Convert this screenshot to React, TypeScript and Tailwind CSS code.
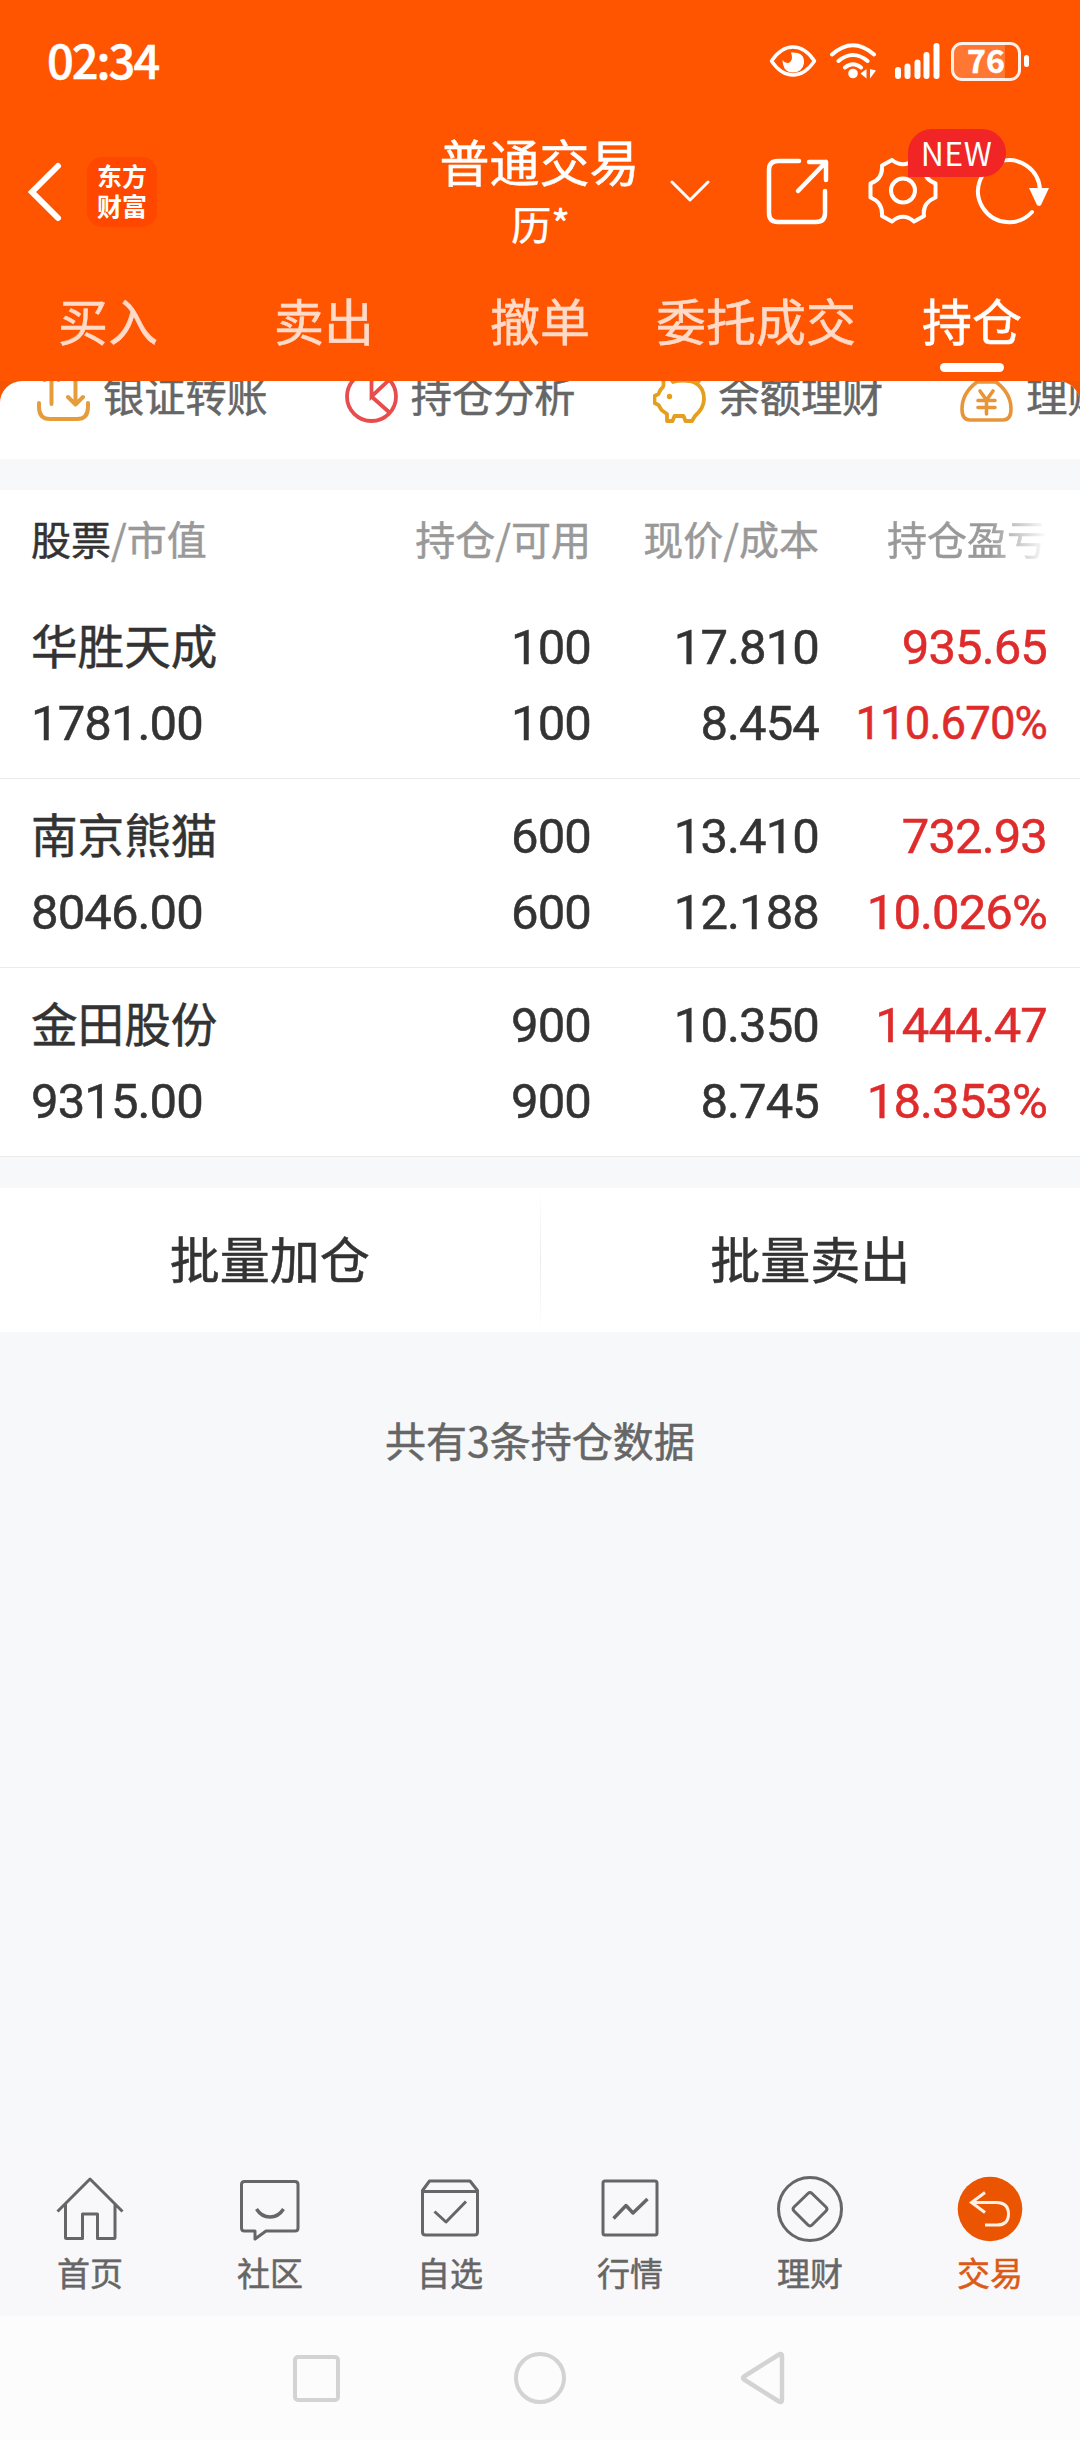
import React from 'react';

const QUICK_LINKS = [
  { label: '银证转账', icon: <TransferIcon /> },
  { label: '持仓分析', icon: <PieIcon /> },
  { label: '余额理财', icon: <PiggyIcon /> },
  { label: '理财产品', icon: <MoneyBagIcon /> },
];

const TABS = ['买入', '卖出', '撤单', '委托成交', '持仓'];

const POSITIONS = [
  { name: '华胜天成', value: '1781.00', held: '100', usable: '100', price: '17.810', cost: '8.454', profit: '935.65', rate: '110.670%' },
  { name: '南京熊猫', value: '8046.00', held: '600', usable: '600', price: '13.410', cost: '12.188', profit: '732.93', rate: '10.026%' },
  { name: '金田股份', value: '9315.00', held: '900', usable: '900', price: '10.350', cost: '8.745', profit: '1444.47', rate: '18.353%' },
];

const NAV_ITEMS = [
  { label: '首页', icon: <HomeIcon /> },
  { label: '社区', icon: <CommunityIcon /> },
  { label: '自选', icon: <WatchlistIcon /> },
  { label: '行情', icon: <MarketIcon /> },
  { label: '理财', icon: <WealthIcon /> },
  { label: '交易', icon: <TradeIcon />, active: true },
];

function TransferIcon() {
  return (
    <svg width="53" height="53" viewBox="0 0 53 53" fill="none" stroke="#e59d3c" strokeWidth="4" strokeLinecap="round" strokeLinejoin="round">
      <path d="M2 33v4q0 12 11 12h27q11 0 11-12v-4M14.500 34V3M7.500 10l7-7 7 7M38.500 5v29M31 27l7.500 7.500 7.500-7.500" />
    </svg>
  );
}

function PieIcon() {
  return (
    <svg width="53" height="53" viewBox="0 0 53 53" fill="none" stroke="#e84c4c" strokeWidth="3.800">
      <circle cx="26.500" cy="26.500" r="24.500" />
      <path d="M26.500 2v24.500L44.500 9.500M26.500 26.500l18 16" />
    </svg>
  );
}

function PiggyIcon() {
  return (
    <svg width="53" height="53" viewBox="0 0 53 53" fill="none" stroke="#e59f1e" strokeWidth="3.800" strokeLinejoin="round" strokeLinecap="round">
      <path d="M10 17q1.500-3-1-11 7 0 11 6 7-2 16-1 15 3 15 18 0 9-9 17l-3 5h-6.500l-2-5h-9l-2 5h-5.500v-7l-5.500-4-3-5-4-2v-7l4-2q1-4 4.500-7z" />
      <path d="M44 13q4-3 3-9" />
      <circle cx="16.500" cy="26.500" r="2.700" fill="#e59f1e" stroke="none" />
    </svg>
  );
}

function MoneyBagIcon() {
  return (
    <svg width="53" height="53" viewBox="0 0 53 53" fill="none" stroke="#e8953a" strokeWidth="3.600" strokeLinejoin="round" strokeLinecap="round">
      <path d="M17 12Q2 23 2 39q0 11 8 11h33q8 0 8-11 0-16-15-27zM19 3h15l-3 7h-9z" />
      <path d="M20 21l6.500 9 6.500-9M18 30.500h17M18 37.500h17M26.500 30.500V44" />
    </svg>
  );
}

function HomeIcon() {
  return (
    <svg width="68" height="68" viewBox="0 0 68 68" fill="none" stroke="#666" strokeWidth="3" strokeLinejoin="round">
      <path d="M1.500 36.500L34 4l32.500 32.500M9.500 29v33.500q0 1 1 1H26.500V39h15v24.500H58q1 0 1-1V29" />
    </svg>
  );
}

function CommunityIcon() {
  return (
    <svg width="68" height="68" viewBox="0 0 68 68" fill="none" stroke="#666" strokeWidth="3" strokeLinejoin="round">
      <path d="M8.500 6.500H59q3 0 3 3V53q0 3-3 3H30L19 64V56H8.500q-3 0-3-3V9.500q0-3 3-3z" />
      <path d="M20.500 34q5 8 13.500 8t13.500-8" strokeWidth="3.400" />
    </svg>
  );
}

function WatchlistIcon() {
  return (
    <svg width="68" height="68" viewBox="0 0 68 68" fill="none" stroke="#666" strokeWidth="3" strokeLinejoin="round">
      <path d="M6.500 15.500L13.500 6H54l7.500 9.500V57q0 3-3 3h-49q-3 0-3-3zM6.500 16.500h55" />
      <path d="M18.500 36.500L30 47l20-20.500" />
    </svg>
  );
}

function MarketIcon() {
  return (
    <svg width="68" height="68" viewBox="0 0 68 68" fill="none" stroke="#666" strokeWidth="3" strokeLinejoin="round">
      <rect x="7" y="6" width="54" height="54" rx="2" />
      <path d="M17.500 43.500L30 30.500l7 7.500L51.500 24" strokeWidth="3.400" />
    </svg>
  );
}

function WealthIcon() {
  return (
    <svg width="68" height="68" viewBox="0 0 68 68" fill="none" stroke="#666" strokeWidth="3" strokeLinejoin="round">
      <circle cx="34" cy="34" r="31.500" />
      <path d="M32 18.500q2-2 4 0L50 32q2 2 0 4L36 50q-2 2-4 0L18 36q-2-2 0-4z" />
    </svg>
  );
}

function TradeIcon() {
  return (
    <svg width="68" height="68" viewBox="0 0 68 68" fill="none" stroke="#fff0e4" strokeWidth="3">
      <circle cx="34" cy="34" r="32.300" fill="#eb5502" stroke="none" />
      <path d="M29 17.500L15.500 27.500 29 37.500M15.500 27.500H40q12.500 0 12.500 11.500T40 50H29" />
    </svg>
  );
}

function EyeIcon() {
  return (
    <svg width="48" height="34" viewBox="0 0 48 34" fill="none">
      <path d="M2.500 17Q12 3 24 3t21.500 14Q36 31 24 31T2.500 17z" stroke="#fff" strokeWidth="3.400" strokeLinejoin="round" />
      <path d="M22 8.500q14-1 13 11-2 9-11 9-10 0-10.500-12.500 3 4.500 7 2.500 4-3 1.500-10z" fill="#fff" />
    </svg>
  );
}

function WifiIcon() {
  return (
    <svg width="48" height="38" viewBox="0 0 48 38" fill="none" stroke="#fff" strokeWidth="4" strokeLinecap="round">
      <path d="M3 12.500q21-18.500 42 0M9.500 19q14.500-12 29 0M16 25.500q8-6.500 16 0" />
      <circle cx="24" cy="31.500" r="4.800" fill="#fff" stroke="none" />
      <path d="M37.500 27v9.500l-6-5zM41 27v9.500l6-8z" fill="#fff" stroke="none" />
    </svg>
  );
}

function SignalIcon() {
  return (
    <svg width="46" height="36" viewBox="0 0 46 36" fill="#fff">
      <rect x="0" y="24" width="6" height="12" rx="3" />
      <rect x="9.500" y="20.500" width="6" height="15.500" rx="3" />
      <rect x="19.500" y="16.500" width="6" height="19.500" rx="3" />
      <rect x="28.500" y="9" width="6" height="27" rx="3" />
      <rect x="38.500" y="0" width="6" height="36" rx="3" />
    </svg>
  );
}

function GearIcon() {
  return (
    <svg width="70" height="68" viewBox="0 0 70 68" fill="none" stroke="#fff" strokeWidth="4" strokeLinejoin="round">
      <path d="M24 2q11 8.500 22 0l10 5.500Q55 21 67.500 25.500v14Q54 45 56 58l-10 5.500q-11-9.500-22 0L14 58q1-13.500-11.500-18.500v-14Q15 21 14 7.500z" />
      <circle cx="35" cy="32.500" r="12" />
    </svg>
  );
}

const StatusBar = () => (
  <div className="h-[122px] flex items-center justify-between pl-[47px] pr-[51px] text-white">
    <span className="pb-[5px] text-[47px] leading-none font-medium tracking-[-2px]">02:34</span>
    <div className="flex items-center">
      <EyeIcon />
      <div className="ml-[12px]"><WifiIcon /></div>
      <div className="ml-[18px]"><SignalIcon /></div>
      <div className="ml-[10px] w-[70px] h-[39px] rounded-[11px] border-3 border-white/90 bg-linear-to-r from-white/20 from-80% to-transparent to-80% flex items-center justify-center pb-[4px] font-bold text-[32px] leading-none">
        76
      </div>
      <div className="ml-[3px] w-[5px] h-[12px] rounded-full bg-white" />
    </div>
  </div>
);

const TitleBar = () => (
  <div className="h-[140px] flex items-center text-white">
    <div className="flex-1 flex items-center pl-[27px]">
      <svg width="36" height="62" viewBox="0 0 36 62" fill="none" stroke="#fff" strokeWidth="6" strokeLinecap="round">
        <path d="M31 5L5 31l26 26" />
      </svg>
      <div className="ml-[24px] w-[70px] h-[70px] rounded-[15px] bg-[#ff4700] flex items-center justify-center pb-[5px] text-[25px] leading-[30px] font-bold [-webkit-text-stroke:0]">
        <p>东方<br />财富</p>
      </div>
    </div>
    <div className="w-[200px] pb-[3px] pl-[2px] flex flex-col items-center">
      <span className="text-[50px] leading-[64px] whitespace-nowrap">普通交易</span>
      <span className="pl-[2px] text-[40px] leading-[62px]">历*</span>
    </div>
    <div className="flex-1 flex items-center pl-[30px]">
      <svg width="42" height="24" viewBox="0 0 42 24" fill="none" stroke="#fff" strokeWidth="3" strokeLinecap="round" strokeLinejoin="round">
        <path d="M3 2l18 18L39 2" />
      </svg>
      <svg className="ml-[55px]" width="64" height="68" viewBox="0 0 64 68" fill="none" stroke="#fff" strokeWidth="4.500" strokeLinecap="round" strokeLinejoin="round">
        <path d="M33 3H12Q3 3 3 12v43q0 9 9 9h38q9 0 9-9V33M43 4h17v18M60 4L32 33" />
      </svg>
      <div className="relative ml-[38px]">
        <GearIcon />
        <span className="absolute z-10 left-[40px] top-[-29px] w-[98px] h-[48px] rounded-[24px] rounded-bl-none bg-[#f12525] flex items-center justify-center pb-[3px] text-[32px] tracking-[0.500px] [-webkit-text-stroke:0]">
          NEW
        </span>
      </div>
      <svg className="ml-[35px]" width="78" height="72" viewBox="0 0 78 72" fill="none" stroke="#fff" strokeWidth="4" strokeLinecap="round">
        <path d="M59 56A31 31 0 1 1 67 34" />
        <path d="M56 32h20l-8 17q-2 2-4 0z" fill="#fff" stroke="none" />
      </svg>
    </div>
  </div>
);

const Tabs = () => (
  <div className="h-[119px] grid grid-cols-5">
    {TABS.map((tab) => (
      <div key={tab} className={`flex flex-col items-center pt-[26px] ${tab === '持仓' ? 'text-white' : 'text-[#ffdac8]'}`}>
        <span className="text-[50px] leading-[62px] whitespace-nowrap">{tab}</span>
        {tab === '持仓' && <div className="mt-[13px] w-[64px] h-[9px] rounded-full bg-white" />}
      </div>
    ))}
  </div>
);

// Scrolled under the header, so the top of the row is cut off.
const QuickLinks = () => (
  <div className="bg-[#f35503]">
    <div className="h-[78px] bg-white rounded-t-[22px] overflow-hidden flex items-start pl-[37px] gap-[77px]">
      {QUICK_LINKS.map(({ label, icon }) => (
        <div key={label} className="shrink-0 h-[53px] mt-[-11px] flex items-center gap-[13px]">
          {icon}
          <span className="pb-[5px] text-[41.200px] leading-[53px] text-[#666] whitespace-nowrap">{label}</span>
        </div>
      ))}
    </div>
  </div>
);

const Cell: React.FC<{ top: string; bottom: string; className?: string }> = ({ top, bottom, className = '' }) => (
  <div className={`flex flex-col text-right font-[Roboto] text-[49px] leading-[76px] tracking-[-0.900px] ${className}`}>
    <span>{top}</span>
    <span className={bottom.length > 7 ? 'text-[45.500px]' : ''}>{bottom}</span>
  </div>
);

const Positions = () => (
  <div className="bg-white">
    <div className="h-[100px] pb-[5px] pl-[31px] pr-[33px] grid grid-cols-[1fr_260px_228px_228px] items-center text-right text-[40px] text-[#999]">
      <span className="text-left"><span className="text-[#333]">股票</span>/市值</span>
      <span>持仓/可用</span>
      <span>现价/成本</span>
      <span className="bg-linear-to-r from-[#999] from-75% to-white bg-clip-text text-transparent">持仓盈亏</span>
    </div>
    {POSITIONS.map((p) => (
      <div key={p.name} className="h-[189px] pt-[20px] pl-[31px] pr-[33px] grid grid-cols-[1fr_260px_228px_228px] items-start border-b border-[#ebebeb] text-[#333]">
        <div className="flex flex-col">
          <span className="h-[76px] text-[46.600px] leading-[68px]">{p.name}</span>
          <span className="font-[Roboto] text-[49px] leading-[76px] tracking-[-0.900px]">{p.value}</span>
        </div>
        <Cell top={p.held} bottom={p.usable} />
        <Cell top={p.price} bottom={p.cost} />
        <Cell top={p.profit} bottom={p.rate} className="text-[#de2b2b]" />
      </div>
    ))}
  </div>
);

const BatchActions = () => (
  <div className="mt-[31px] h-[144px] bg-white flex items-center text-[50px] text-[#333]">
    <button className="flex-1 pb-[5px]">批量加仓</button>
    <div className="w-px h-full bg-linear-to-b from-white via-[#ececec] to-white" />
    <button className="flex-1 pb-[5px]">批量卖出</button>
  </div>
);

const BottomNav = () => (
  <div className="h-[174px] pt-[33px] bg-[#f8f8fa] grid grid-cols-6">
    {NAV_ITEMS.map(({ label, icon, active }) => (
      <div key={label} className="flex flex-col items-center">
        {icon}
        <span className={`mt-[8px] text-[33px] leading-[42px] ${active ? 'text-[#dc5a18]' : 'text-[#666]'}`}>{label}</span>
      </div>
    ))}
  </div>
);

const SystemBar = () => (
  <div className="h-[124px] bg-[#fcfcfc] flex items-center justify-center gap-[172px]">
    <div className="w-[52px] flex justify-center">
      <div className="w-[47px] h-[47px] rounded-[5px] border-[4.500px] border-[#d3d3d3]" />
    </div>
    <div className="w-[52px] h-[52px] rounded-full border-[4.500px] border-[#d3d3d3]" />
    <svg width="52" height="54" viewBox="0 0 52 54" fill="none" stroke="#d3d3d3" strokeWidth="4.500" strokeLinejoin="round">
      <path d="M6 25.500Q4 27 6 28.500L41 50.500q3 1.500 3-1.500V5q0-3-3-1.500z" />
    </svg>
  </div>
);

export default function App() {
  return (
    <div className="w-[1080px] h-[2440px] overflow-hidden flex flex-col bg-[#f7f8fa] font-['Noto_Sans_CJK_SC',sans-serif] [-webkit-text-stroke:0.5px]">
      <div className="bg-[#ff5500]">
        <StatusBar />
        <TitleBar />
        <Tabs />
      </div>
      <QuickLinks />
      <div className="h-[31px]" />
      <Positions />
      <BatchActions />
      <p className="mt-[76px] text-center text-[41px] leading-[62px] text-[#666]">共有3条持仓数据</p>
      <div className="flex-1" />
      <BottomNav />
      <SystemBar />
    </div>
  );
}
